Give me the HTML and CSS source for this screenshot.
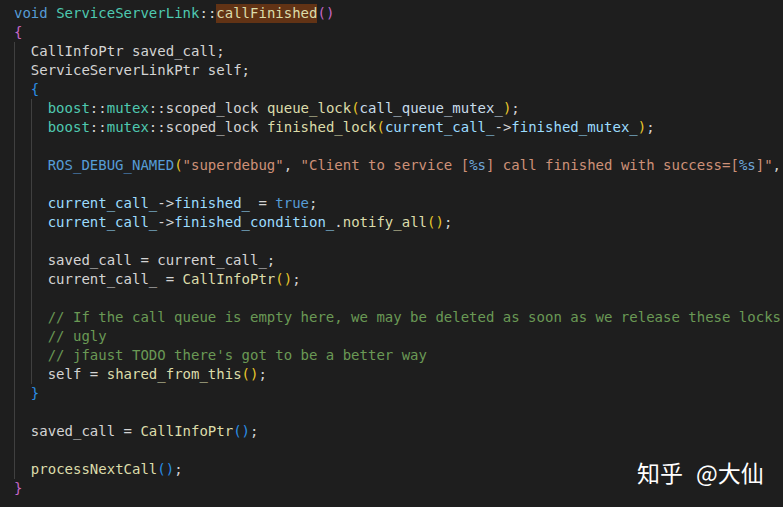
FILE: index.html
```html
<!DOCTYPE html>
<html>
<head>
<meta charset="utf-8">
<link rel="stylesheet" href="styles.css">
</head>
<body>
<div class="editor">
<div class="code">
<div class="ln"><span class="kw">void</span> <span class="ty">ServiceServerLink</span>::<span class="hl fn">callFinished</span><span class="b1">()</span></div>
<div class="ln"><span class="b1">{</span></div>
<div class="ln"><span class="ind"></span>CallInfoPtr saved_call;</div>
<div class="ln"><span class="ind"></span>ServiceServerLinkPtr self;</div>
<div class="ln"><span class="ind"></span><span class="b2">{</span></div>
<div class="ln"><span class="ind"></span><span class="ind"></span><span class="ty">boost</span>::<span class="ty">mutex</span>::scoped_lock <span class="fn">queue_lock</span><span class="b3">(</span><span class="mv">call_queue_mutex_</span><span class="b3">)</span>;</div>
<div class="ln"><span class="ind"></span><span class="ind"></span><span class="ty">boost</span>::<span class="ty">mutex</span>::scoped_lock <span class="fn">finished_lock</span><span class="b3">(</span><span class="va">current_call_</span>-&gt;<span class="va">finished_mutex_</span><span class="b3">)</span>;</div>
<div class="ln"><span class="ind"></span><span class="ind"></span></div>
<div class="ln"><span class="ind"></span><span class="ind"></span><span class="mac">ROS_DEBUG_NAMED</span><span class="b3">(</span><span class="str">"superdebug"</span>, <span class="str">"Client to service [<span class="esc">%s</span>] call finished with success=[<span class="esc">%s</span>]"</span>,</div>
<div class="ln"><span class="ind"></span><span class="ind"></span></div>
<div class="ln"><span class="ind"></span><span class="ind"></span><span class="va">current_call_</span>-&gt;<span class="va">finished_</span> = <span class="kw">true</span>;</div>
<div class="ln"><span class="ind"></span><span class="ind"></span><span class="va">current_call_</span>-&gt;<span class="va">finished_condition_</span>.<span class="fn">notify_all</span><span class="b3">()</span>;</div>
<div class="ln"><span class="ind"></span><span class="ind"></span></div>
<div class="ln"><span class="ind"></span><span class="ind"></span>saved_call = current_call_;</div>
<div class="ln"><span class="ind"></span><span class="ind"></span>current_call_ = <span class="fn">CallInfoPtr</span><span class="b3">()</span>;</div>
<div class="ln"><span class="ind"></span><span class="ind"></span></div>
<div class="ln"><span class="ind"></span><span class="ind"></span><span class="cm">// If the call queue is empty here, we may be deleted as soon as we release these locks</span></div>
<div class="ln"><span class="ind"></span><span class="ind"></span><span class="cm">// ugly</span></div>
<div class="ln"><span class="ind"></span><span class="ind"></span><span class="cm">// jfaust TODO there's got to be a better way</span></div>
<div class="ln"><span class="ind"></span><span class="ind"></span>self = <span class="fn">shared_from_this</span><span class="b3">()</span>;</div>
<div class="ln"><span class="ind"></span><span class="b2">}</span></div>
<div class="ln"><span class="ind"></span></div>
<div class="ln"><span class="ind"></span>saved_call = <span class="fn">CallInfoPtr</span><span class="b2">()</span>;</div>
<div class="ln"><span class="ind"></span></div>
<div class="ln"><span class="ind"></span><span class="fn">processNextCall</span><span class="b2">()</span>;</div>
<div class="ln"><span class="b1">}</span></div>
</div>
<div class="mark"><span>知乎</span><span class="at">@大仙</span></div>
</div>
</body>
</html>
```
FILE: styles.css
```css
html, body {
  margin: 0;
  padding: 0;
  background: #1e1e1e;
}
.editor {
  position: relative;
  width: 783px;
  height: 507px;
  overflow: hidden;
  background: #1e1e1e;
}
.code {
  padding: 4px 0 0 14px;
  font-family: "DejaVu Sans Mono", monospace;
  font-size: 14px;
  line-height: 19px;
  color: #d4d4d4;
}
.ln {
  white-space: pre;
  height: 19px;
}
.ind {
  display: inline-block;
  width: 2ch;
  height: 19px;
  vertical-align: top;
  box-shadow: inset 1px 0 0 #404040;
}
.kw { color: #569cd6; }
.ty { color: #4ec9b0; }
.fn { color: #dcdcaa; }
.va { color: #9cdcfe; }
.mv { color: #c8dcea; }
.mac { color: #569cd6; }
.str { color: #ce9178; }
.esc { color: #6fa8dc; }
.cm { color: #6a9955; }
.b1 { color: #c766c7; }
.b2 { color: #2a8ee6; }
.b3 { color: #e8c72a; }
.hl {
  display: inline-block;
  vertical-align: top;
  line-height: 19px;
  background: #623315;
}
.mark {
  position: absolute;
  left: 637px;
  top: 456px;
  display: flex;
  gap: 13px;
  font-family: "Noto Sans CJK SC", "Noto Sans", sans-serif;
  font-size: 23px;
  line-height: 32px;
  color: #ffffff;
  white-space: pre;
}
```
